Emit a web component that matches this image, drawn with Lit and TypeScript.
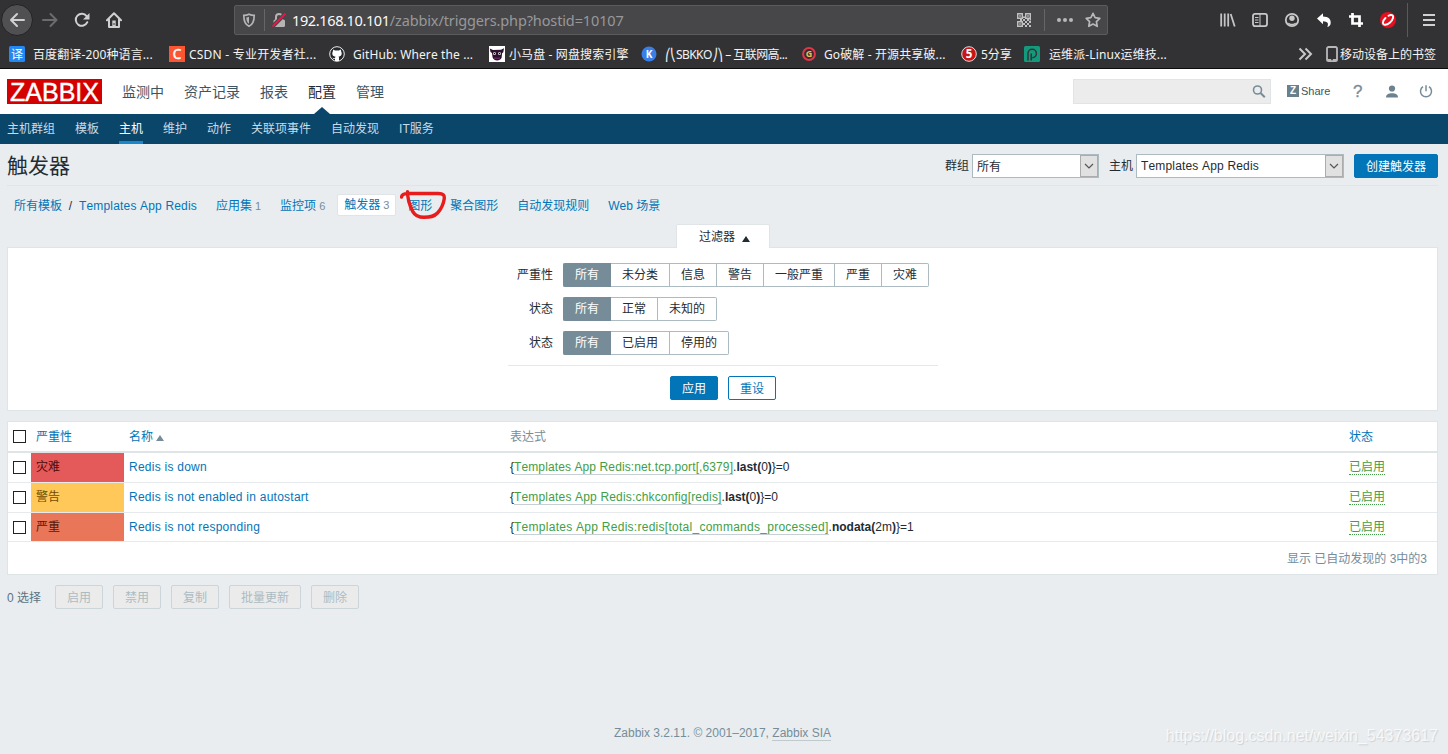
import { LitElement, html, css, svg } from "lit";
import { customElement } from "lit/decorators.js";

const BOOKMARKS = [
  ["fanyi", "百度翻译-200种语言..."],
  ["csdn", "CSDN - 专业开发者社..."],
  ["github", "GitHub: Where the ..."],
  ["pan", "小马盘 - 网盘搜索引擎"],
  ["k", "⎛⎝SBKKO⎠⎞ – 互联网高..."],
  ["go", "Go破解 - 开源共享破..."],
  ["five", "5分享"],
  ["p", "运维派-Linux运维技..."],
];

const FILTERS: [string, string[]][] = [
  ["严重性", ["所有", "未分类", "信息", "警告", "一般严重", "严重", "灾难"]],
  ["状态", ["所有", "正常", "未知的"]],
  ["状态", ["所有", "已启用", "停用的"]],
];

const ROWS = [
  { sev: "灾难", cls: "disaster", name: "Redis is down", item: "Templates App Redis:net.tcp.port[,6379]", fn: "last", arg: "0", val: "0" },
  { sev: "警告", cls: "warning", name: "Redis is not enabled in autostart", item: "Templates App Redis:chkconfig[redis]", fn: "last", arg: "0", val: "0" },
  { sev: "严重", cls: "high", name: "Redis is not responding", item: "Templates App Redis:redis[total_commands_processed]", fn: "nodata", arg: "2m", val: "1" },
];

const icon = (name: string) => {
  const shapes: Record<string, unknown> = {
    back: svg`<path d="M15 8H2M8 2L2 8l6 6" fill="none" stroke="#d0d0d1" stroke-width="2" stroke-linecap="round" stroke-linejoin="round"/>`,
    forward: svg`<path d="M1 8h13M8.500 2l6 6-6 6" fill="none" stroke="#6c6c6e" stroke-width="2" stroke-linecap="round" stroke-linejoin="round"/>`,
    reload: svg`<path d="M13.300 10.200A6 6 0 1 1 12.600 4.200" fill="none" stroke="#d0d0d1" stroke-width="2" stroke-linecap="round"/><path d="M15.500 1v6.500H9z" fill="#d0d0d1"/>`,
    home: svg`<path d="M1 8.300L8 1.300l7 7M3 7.500V15h10V7.500" fill="none" stroke="#d0d0d1" stroke-width="2" stroke-linecap="round" stroke-linejoin="round"/><path d="M6.300 8.500h3.400V15H6.300z" fill="#d0d0d1"/><path d="M7.500 11h1v2h-1z" fill="#323234"/>`,
    shield: svg`<path d="M8 2.200c1.800.9 3.500 1.200 5.200 1.200 0 5.500-.8 8.800-5.200 10.900C3.600 12.200 2.800 8.900 2.800 3.400 4.500 3.400 6.200 3.100 8 2.200z" fill="none" stroke="#b4b4b5" stroke-width="1.700"/><path d="M8 4.800v7c-2-1.400-2.600-3.300-2.700-6.400 1-.1 1.900-.3 2.700-.6z" fill="#b4b4b5"/>`,
    lock: svg`<path d="M5 8V5a3 3 0 0 1 6 0v3" fill="none" stroke="#b4b4b5" stroke-width="2"/><rect x="2.500" y="7.500" width="11.500" height="7.500" rx="1.500" fill="#b4b4b5"/><path d="M1.500 14.500L14.500 1.500" stroke="#474749" stroke-width="4"/><path d="M1.500 14.500L14.500 1.500" stroke="#f70f45" stroke-width="2"/>`,
    qr: svg`<path d="M1.700 1.700h4.600v4.600H1.700zM9.700 1.700h4.600v4.600H9.700zM1.700 9.700h4.600v4.600H1.700z" fill="none" stroke="#c0c0c1" stroke-width="1.400"/><path d="M3.200 3.200h1.600v1.600H3.200zM11.200 3.200h1.600v1.600h-1.600zM3.200 11.200h1.600v1.600H3.200zM7 4.500h2V6H7zM4 7h2v2H4zM7 7h2v2H7zM9 9h2v2H9zM11 7h2v2h-2zM13 9h2v2h-2zM11 11h2v2h-2zM9 13h2v2H9zM13 13h2v2h-2zM7 11h2v2H7zM13.500 7H15v1.500h-1.500z" fill="#c0c0c1"/>`,
    dots: svg`<circle cx="2" cy="8" r="2"/><circle cx="8" cy="8" r="2"/><circle cx="14" cy="8" r="2"/>`,
    star: svg`<path d="M8 1.300l2.100 4.300 4.700.7-3.400 3.300.8 4.700L8 12.100l-4.200 2.200.8-4.700L1.200 6.300l4.700-.7z" fill="none" stroke="#b8b8b9" stroke-width="1.700" stroke-linejoin="round"/>`,
    library: svg`<path d="M1.200 1.500v13M4.700 1.500v13M8.200 1.500v13M10.700 2l4 12.500" fill="none" stroke="#c4c4c5" stroke-width="1.800"/>`,
    sidebar: svg`<rect x="1" y="1.900" width="14" height="12.200" rx="2" fill="none" stroke="#c8c8c9" stroke-width="1.800"/><path d="M8 2v12" stroke="#c8c8c9"/><path d="M3 5.500h3.500M3 8h3.500M3 10.500h3.500" stroke="#c8c8c9"/>`,
    account: svg`<circle cx="8" cy="8" r="6.200" fill="none" stroke="#c8c8c9" stroke-width="1.800"/><circle cx="8" cy="6.300" r="2.700" fill="#c8c8c9"/><path d="M3.500 10.500c2 .5 2.500 1.300 4.500 1.300s2.500-.8 4.500-1.300c-.8 2-2.500 3-4.500 3s-3.700-1-4.500-3z" fill="#c8c8c9"/>`,
    undo: svg`<path d="M1 6.500L7 1.300v3.200c5.300.2 8 2.500 7.700 6.500-.1 2-1.200 3.500-3.400 4 1.700-3.600.3-5.600-4.300-5.700v3z" fill="#fff"/>`,
    crop: svg`<path d="M1 4.500h10.500v7H15M4.500 1v10.500h7V15" fill="none" stroke="#fff" stroke-width="2.700"/>`,
    trend: svg`<circle cx="8" cy="8" r="8" fill="#e60f1e"/><path d="M8.500 3.800C11 2.300 13.700 3 13 6c-.8 3.300-5 7-8.300 6.700C1.800 12.400 2.800 8.600 5.500 6" fill="none" stroke="#fff" stroke-width="1.900" stroke-linecap="round"/>`,
    menu: svg`<path d="M2 3h12M2 8h12M2 13h12" stroke="#d0d0d1" stroke-width="1.800"/>`,
    more: svg`<path d="M2.500 2.500L8 8l-5.500 5.500M8.500 2.500L14 8l-5.500 5.500" fill="none" stroke="#c8c8c9" stroke-width="2"/>`,
    phone: svg`<rect x="3" y="1" width="10" height="14" rx="1.600" fill="none" stroke="#b8b8b9" stroke-width="1.800"/><path d="M3 13.800h10" stroke="#b8b8b9" stroke-width="1.600"/><path d="M7 13.700h2" stroke="#323234"/>`,
    fanyi: svg`<rect width="16" height="16" rx="1.500" fill="#2388f2"/><text x="8" y="12.600" font-size="12" text-anchor="middle" fill="#fff">译</text>`,
    csdn: svg`<rect width="16" height="16" fill="#fc5531"/><text x="8" y="12.800" font-size="13.500" text-anchor="middle" fill="#fff" stroke="#fff" stroke-width=".5">C</text>`,
    github: svg`<circle cx="8" cy="8" r="7.300" fill="#24292e" stroke="#eee"/><path d="M4.300 3.500L6 4.600h4l1.700-1.100.5 2c1.300 3-.1 4.800-2.600 5.100l.4 1V15H6v-2c-1.500.2-1.900-.5-2.600-1.300.9-.1 1.200 1 2.600.5l.4-1.600C3.800 10.300 2.500 8.500 3.800 5.500z" fill="#fff"/>`,
    pan: svg`<rect width="16" height="16" fill="#fff"/><path d="M.8 2.500L4 4l8-.2 3-1.600-.7 4-1.200 1-.5 4.500C11 15.300 5 15.300 3.600 11.500L3 7 1.500 6z" fill="#2b1030"/><circle cx="5.500" cy="7.500" r="1.500" fill="#ddd"/><circle cx="10.500" cy="7.500" r="1.500" fill="#ddd"/><circle cx="5.500" cy="7.500" r=".7"/><circle cx="10.500" cy="7.500" r=".7"/><path d="M5 11.500h6v1.500H5z" fill="#602560"/>`,
    k: svg`<circle cx="8" cy="8" r="7.500" fill="#3a7ee8"/><text x="8" y="11.600" font-size="10" font-weight="bold" text-anchor="middle" fill="#fff">K</text>`,
    go: svg`<circle cx="8" cy="8" r="5.900" fill="#3a2a30" stroke="#e0384a" stroke-width="2"/><text x="8" y="11.200" font-size="9" font-weight="bold" text-anchor="middle" fill="#e8c14e">G</text>`,
    five: svg`<circle cx="8" cy="8" r="7.300" fill="#c81414" stroke="#ddd" stroke-width="1"/><text x="8" y="12.200" font-size="11.500" font-weight="bold" text-anchor="middle" fill="#fff">5</text>`,
    p: svg`<rect width="16" height="16" rx="1.500" fill="#139a7c"/><path d="M4 14.500V7.500a4.200 4.200 0 1 1 4.200 4.200M7.200 14.500V7.500" fill="none" stroke="#343436" stroke-width="1.500"/>`,
    search: svg`<circle cx="6.500" cy="6" r="4" fill="none" stroke="#768d99" stroke-width="1.600"/><path d="M9.500 9L13.800 13.300" stroke="#768d99" stroke-width="2"/>`,
    user: svg`<circle cx="8" cy="4.500" r="3.100" fill="#6c838f"/><path d="M2 13.500c0-3 2.500-4.300 6-4.300s6 1.300 6 4.300z" fill="#6c838f"/>`,
    power: svg`<path d="M5 2.700a5.500 5.500 0 1 0 6 0M8 1.300v6" fill="none" stroke="#768d99" stroke-width="1.500"/>`,
    chevron: svg`<path d="M4 6l4 4 4-4" fill="none" stroke="#555" stroke-width="1.200"/>`,
  };
  return html`<svg class="ic ic-${name}" viewBox="0 0 16 16" width="16" height="16">${shapes[name]}</svg>`;
};

@customElement("app-root")
export class AppRoot extends LitElement {
  static styles = css`
    :host {
      display: flex; flex-direction: column; width: 1448px; height: 754px; overflow: hidden;
      background: #e9edf0; color: #1f2c33;
      font: 12px/24px "Liberation Sans", "Noto Sans CJK SC", sans-serif;
      font-kerning: none; white-space: nowrap; position: relative;
    }
    * { box-sizing: border-box; }
    .ic { display: block; flex: none; }
    .chrome { height: 69px; background: #323234; border-bottom: 1px solid #0c0c0d; color: #f4f4f5; font-family: "Noto Sans", "Noto Sans CJK SC", sans-serif; flex: none; }
    .toolbar { height: 40px; display: flex; align-items: center; }
    .back { width: 32px; height: 32px; margin: 0 9px 0 1px; border-radius: 50%; background: #505052; border: 1px solid #232325; display: grid; place-items: center; }
    .toolbar > .ic-forward, .toolbar > .ic-reload { margin-right: 16px; }
    .toolbar > .ic-home { margin-right: 112px; }
    .url { width: 874px; height: 30px; background: #474749; border: 1px solid #5b5b5d; border-radius: 2px; display: flex; align-items: center; padding-left: 6px; fill: #b8b8b9; }
    .sep { width: 1px; height: 22px; background: #65656a; }
    .url .ic-shield { margin-right: 7px; }
    .url .ic-lock { margin: 0 5px 0 6px; }
    .addr { flex: 1; font: 14.5px/28px "Noto Sans", sans-serif; color: #98989a; letter-spacing: -.13px; }
    .addr b { font-weight: 400; color: #fafafa; letter-spacing: -.37px; }
    .url .ic-qr { margin-right: 12px; }
    .url .ic-dots { margin: 0 12px 0 12px; }
    .url .ic-star { margin-right: 6px; }
    .tools { display: flex; gap: 16px; margin-left: 112px; }
    .toolbar > .sep { height: 34px; margin: 0 13px 0 11px; background: #5a5a5d; }
    .marks { height: 28px; display: grid; align-items: center; padding-left: 9px;
      grid-template-columns: 24px 136px 20px 140px 24px 136px 20px 132px 24px 136px 23px 137px 20px 43px 25px 248px 27px 16px 1fr; }
    .marks span { letter-spacing: .12px; line-height: 26px; padding-top: 2px; }
    .marks .m-csdn { letter-spacing: .22px; }
    .marks .m-k { letter-spacing: -.55px; }
    .marks .m-five, .marks .mobile { letter-spacing: 0; }
    .head { height: 45px; background: #fff; display: flex; align-items: center; padding-left: 7px; flex: none; }
    .logo { width: 95px; height: 25px; background: #d40000; color: #fff; font-size: 25px; line-height: 26px; text-align: center; -webkit-text-stroke: .4px #fff; margin-right: 20px; }
    .nav { display: flex; gap: 20px; font-size: 14px; line-height: 47px; height: 45px; color: #3c5563; flex: 1; }
    .nav .on { color: #1f2c33; position: relative; }
    .nav .on::after { content: ""; position: absolute; left: 6px; top: 38px; border: 8px solid transparent; border-top: 0; border-bottom: 7px solid #0a466a; }
    .search { width: 198px; height: 25px; background: #ececec; border: 1px solid #dfe4e7; display: flex; align-items: center; justify-content: flex-end; padding-right: 3px; margin-right: 16px; }
    .z { width: 12px; height: 12px; background: #69808d; color: #fff; font: bold 10px/12px "Liberation Sans", sans-serif; text-align: center; margin: 0 2px 1px 0; }
    .share { width: 52px; font-size: 11px; color: #3c5563; padding-bottom: 2px; }
    .q { width: 31px; font-size: 17px; color: #768d99; -webkit-text-stroke: .3px #768d99; }
    .head > .ic-user { margin-right: 18px; }
    .head > .ic-power { margin-right: 14px; }
    .sub { height: 30px; flex: none; background: #0a466a; color: #c9dbe6; display: flex; gap: 20px; padding-left: 7px; line-height: 31px; }
    .sub span { height: 30px; }
    .sub .on { color: #fff; border-bottom: 3px solid #1a87cd; }
    .page { padding: 0 10px 0 7px; display: flex; flex-direction: column; flex: 1; }
    .title { height: 42px; display: flex; align-items: center; border-bottom: 1px solid #dfe4e7; padding-top: 2px; }
    .title h1 { font-size: 21px; font-weight: 400; line-height: 36px; margin: 0; padding-top: 1px; flex: 1; }
    .select { height: 24px; width: 127px; background: #fff; border: 1px solid #acbbc2; display: flex; justify-content: space-between; padding-left: 4px; line-height: 24px; margin: 0 10px 0 3px; }
    .select.wide { width: 208px; line-height: 22px; }
    .select i { width: 18px; height: 22px; background: #e1e1e1; border: 1px solid #acacac; display: grid; place-items: center; }
    .btn { height: 24px; padding: 0 11px; border: 1px solid #0275b8; border-radius: 2px; background: #0275b8; color: #fff; line-height: 24px; }
    .btn.alt { background: #fff; color: #0275b8; }
    .ls { letter-spacing: .17px; }
    .crumbs { height: 38px; display: flex; align-items: center; color: #0275b8; padding-left: 7px; }
    .crumbs > span { line-height: 24px; padding-top: 2px; }
    .crumbs > .ls, .crumbs > .sl { padding-top: 1px; }
    .crumbs .sl { width: 17px; text-align: center; color: #1f2c33; }
    .crumbs small { font-size: 11px; color: #768d99; margin-left: 3px; }
    .crumbs .n { margin-left: 19px; }
    .crumbs > .cur { width: 59px; height: 22px; line-height: 21px; background: #fff; border: 1px solid #dfe4e7; border-radius: 2px; margin-left: 12px; padding: 0 0 0 6px; }
    .crumbs .graph { margin-left: 12px; position: relative; }
    .crumbs .graph + .n { margin-left: 18px; }
    .mark { position: absolute; left: -8px; top: -3px; }
    .tab { width: 94px; height: 24px; margin: 0 0 -1px 669px; background: #fff; border: 1px solid #dfe4e7; border-bottom: 0; display: flex; align-items: center; padding: 1px 0 0 22px; z-index: 1; border-radius: 2px 2px 0 0; }
    .up { width: 0; border: 4px solid transparent; border-top: 0; border-bottom: 6px solid #1f2c33; margin: 4px 0 0 7px; }
    .panel { height: 164px; background: #fff; border: 1px solid #dfe4e7; display: flex; flex-direction: column; align-items: center; padding: 15px 0 0 1px; }
    .rows { width: 430px; height: 103px; border-bottom: 1px solid #e5e8ea; display: grid; grid-auto-rows: 24px; row-gap: 10px; }
    .frow { display: flex; }
    .frow label { width: 45px; text-align: right; margin-right: 10px; }
    .frow span { border: 1px solid #acbbc2; border-left-width: 0; padding: 0 11px; line-height: 22px; }
    .frow span.all { background: #768d99; border-color: #768d99; color: #fff; border-radius: 2px 0 0 2px; padding: 0 12px 0 11px; border-width: 1px 0 1px 1px; }
    .frow span:last-child { border-radius: 0 2px 2px 0; }
    .acts { display: flex; gap: 10px; margin-top: 10px; }
    .table { margin-top: 10px; height: 154px; background: #fff; border: 1px solid #dfe4e7; flex: none; }
    .tr { display: grid; grid-template-columns: 23px 93px 381px 839px 1fr; height: 30px; border-bottom: 1px solid #e7eaec; line-height: 28px; }
    .tr.th { height: 31px; border-bottom: 2px solid #dfe4e7; color: #0275b8; line-height: 31px; }
    .th > span { height: 29px; }
    .tr:nth-child(4) { height: 29px; }
    .tr > * { padding-left: 5px; }
    .tr > .box { width: 13px; height: 13px; border: 1px solid #222; background: #fff; margin: 8px 0 0 5px; padding: 0; }
    .th .gray { color: #768d99; }
    .sort { display: inline-block; border: 4px solid transparent; border-top: 0; border-bottom: 6px solid #768d99; margin-left: 3px; }
    .disaster { background: #e45959; color: #4b0c0c; }
    .warning { background: #ffc859; color: #734d00; }
    .high { background: #e97659; color: #52190b; }
    .name { color: #0275b8; letter-spacing: .25px; }
    .item { color: #429e47; border-bottom: 1px solid #c5cfd4; letter-spacing: .17px; }
    .item-disaster { letter-spacing: .11px; }
    .item-high { letter-spacing: .27px; }
    .on-state { color: #429e47; border-bottom: 1px dotted #429e47; }
    .total { text-align: right; padding-right: 10px; line-height: 35px; height: 31px; color: #768d99; }
    .bulk { display: flex; gap: 10px; margin-top: 10px; color: #5d7380; }
    .bulk .cnt { width: 38px; line-height: 26px; height: 24px; }
    .bulk .btn { background: #ebebeb; border-color: #ccd5d9; color: #acbbc2; }
    .foot { margin-top: auto; padding-bottom: 9px; text-align: center; color: #768d99; }
    .foot u { text-decoration: none; border-bottom: 1px solid #c0c9ce; }
    .wm { position: absolute; right: 10px; bottom: 6px; font-size: 16px; color: rgba(255,255,255,.75); text-shadow: 1px 1px 1px #cdd1d4; }
  `;

  render() {
    return html`
      <div class="chrome">
        <div class="toolbar">
          <div class="back">${icon("back")}</div>
          ${icon("forward")}${icon("reload")}${icon("home")}
          <div class="url">
            ${icon("shield")}<i class="sep"></i>${icon("lock")}
            <div class="addr"><b>192.168.10.101</b>/zabbix/triggers.php?hostid=10107</div>
            ${icon("qr")}<i class="sep"></i>${icon("dots")}${icon("star")}
          </div>
          <div class="tools">${["library", "sidebar", "account", "undo", "crop", "trend"].map(icon)}</div>
          <i class="sep"></i>${icon("menu")}
        </div>
        <div class="marks">
          ${BOOKMARKS.map(([i, t]) => html`${icon(i)}<span class="m-${i}">${t}</span>`)}
          ${icon("more")}${icon("phone")}<span class="mobile">移动设备上的书签</span>
        </div>
      </div>
      <div class="head">
        <div class="logo">ZABBIX</div>
        <div class="nav"><span>监测中</span><span>资产记录</span><span>报表</span><span class="on">配置</span><span>管理</span></div>
        <div class="search">${icon("search")}</div>
        <span class="z">Z</span><span class="share">Share</span><span class="q">?</span>${icon("user")}${icon("power")}
      </div>
      <div class="sub">
        ${["主机群组", "模板", "主机", "维护", "动作", "关联项事件", "自动发现", "IT服务"].map((t) => html`<span class=${t === "主机" ? "on" : ""}>${t}</span>`)}
      </div>
      <div class="page">
        <div class="title">
          <h1>触发器</h1>
          <span>群组</span><div class="select"><span>所有</span><i>${icon("chevron")}</i></div>
          <span>主机</span><div class="select wide"><span class="ls">Templates App Redis</span><i>${icon("chevron")}</i></div>
          <div class="btn">创建触发器</div>
        </div>
        <div class="crumbs">
          <span>所有模板</span><span class="sl">/</span><span class="ls">Templates App Redis</span>
          <span class="n">应用集<small>1</small></span><span class="n">监控项<small>6</small></span>
          <span class="cur">触发器<small>3</small></span>
          <span class="graph">图形<svg class="mark" width="48" height="34" viewBox="400 189 48 34"><path d="M401.500 197c.3-2.500 2.500-3.300 6-3.500h31c4.500 0 6.300 1.500 5.700 5.500-.8 5.500-3 10-6.700 14-3.500 3.700-7 4.200-13.500 4.300-6 0-9-1.500-11.500-6.200-3-6-5-12.500-5-19.500" fill="none" stroke="#e81c1c" stroke-width="3.400" stroke-linecap="round" stroke-linejoin="round"/></svg></span>
          <span class="n">聚合图形</span><span class="n">自动发现规则</span><span class="n">Web 场景</span>
        </div>
        <div class="tab">过滤器<i class="up"></i></div>
        <div class="panel">
          <div class="rows">
            ${FILTERS.map(([l, o]) => html`<div class="frow"><label>${l}</label>${o.map((t, i) => html`<span class=${i ? "" : "all"}>${t}</span>`)}</div>`)}
          </div>
          <div class="acts"><div class="btn">应用</div><div class="btn alt">重设</div></div>
        </div>
        <div class="table">
          <div class="tr th"><i class="box"></i><span>严重性</span><span>名称<i class="sort"></i></span><span class="gray">表达式</span><span>状态</span></div>
          ${ROWS.map((r) => html`<div class="tr">
            <i class="box"></i><span class=${r.cls}>${r.sev}</span><span class="name">${r.name}</span>
            <span>{<span class="item item-${r.cls}">${r.item}</span>.<b>${r.fn}(</b>${r.arg}<b>)</b>}=${r.val}</span>
            <span><span class="on-state">已启用</span></span>
          </div>`)}
          <div class="total">显示 已自动发现的 3中的3</div>
        </div>
        <div class="bulk"><span class="cnt">0 选择</span>${["启用", "禁用", "复制", "批量更新", "删除"].map((t) => html`<div class="btn">${t}</div>`)}</div>
        <div class="foot">Zabbix 3.2.11. © 2001–2017, <u>Zabbix SIA</u></div>
      </div>
      <div class="wm">https://blog.csdn.net/weixin_54373617</div>
    `;
  }
}
